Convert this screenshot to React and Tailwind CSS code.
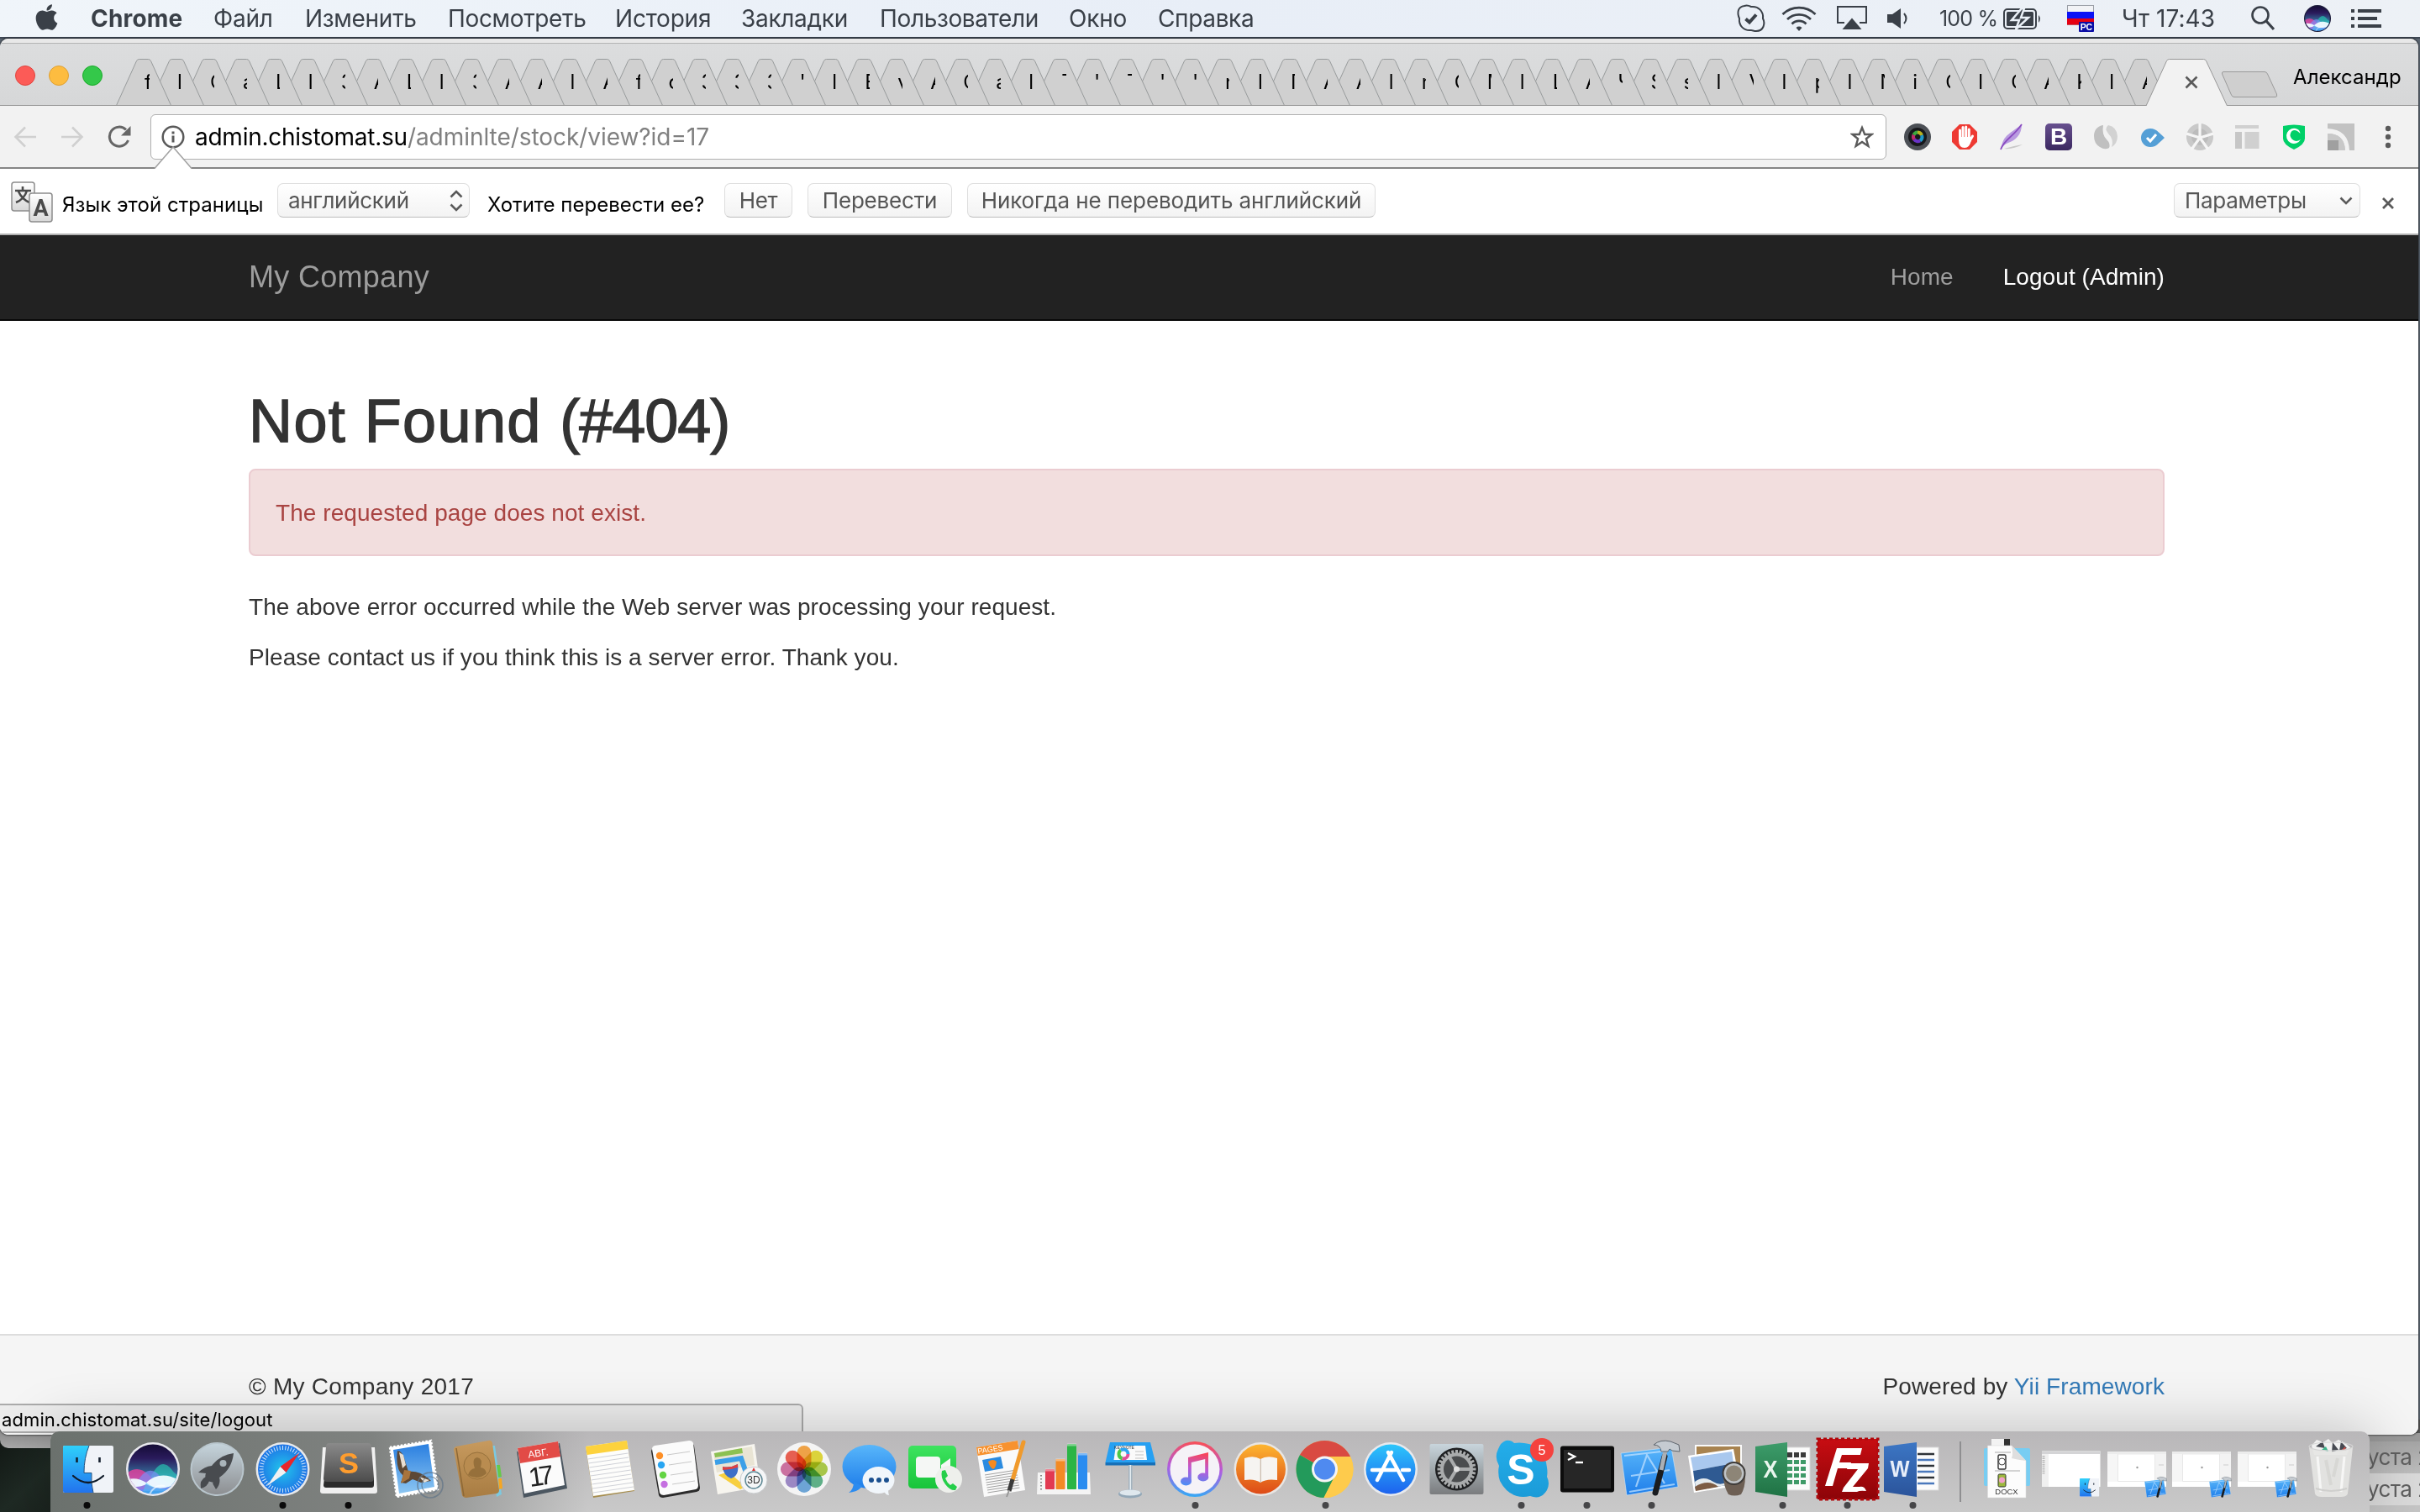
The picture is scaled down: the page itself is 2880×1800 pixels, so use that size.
import React from "react";
import { FaApple } from "react-icons/fa";

const INK = "#3a4048";

/* ---------- menu bar ---------- */

const menus = [
  { t: "Chrome", c: "w-[146px] font-bold tracking-[0.2px]" },
  { t: "Файл", c: "w-[109px] tracking-[-0.2px]" },
  { t: "Изменить", c: "w-[170px] tracking-[-0.3px]" },
  { t: "Посмотреть", c: "w-[199px] tracking-[-0.35px]" },
  { t: "История", c: "w-[150px] tracking-[-0.2px]" },
  { t: "Закладки", c: "w-[165px] tracking-[-0.3px]" },
  { t: "Пользователи", c: "w-[225px] tracking-[-0.35px]" },
  { t: "Окно", c: "w-[106px] tracking-[-0.2px]" },
  { t: "Справка", c: "w-[140px] tracking-[-0.35px]" },
];

function SiriOrb({ id, className, ring = "#e9e9ee" }) {
  return (
    <svg viewBox="0 0 64 64" className={className}>
      <defs>
        <linearGradient id={id + "a"} x1="0" y1="0" x2="0" y2="1">
          <stop offset="0" stopColor="#120a30" />
          <stop offset=".3" stopColor="#2a1b5c" />
          <stop offset=".55" stopColor="#33608f" />
          <stop offset=".75" stopColor="#5b8ff0" />
          <stop offset="1" stopColor="#3b6be0" />
        </linearGradient>
        <clipPath id={id + "c"}><circle cx="32" cy="32" r="29.5" /></clipPath>
      </defs>
      <circle cx="32" cy="32" r="32" fill={ring} />
      <g clipPath={`url(#${id}c)`}>
        <rect width="64" height="64" fill={`url(#${id}a)`} />
        <path d="M30 40c8-16 16-18 24-8 4 6 8 8 12 8v14H28z" fill="#27c9b4" opacity=".65" />
        <path d="M0 38c8-8 18-8 26 0s10 10 16 12l-10 6H0z" fill="#e8409c" opacity=".8" />
        <path d="M14 46c8-14 18-16 26-6 6 8 12 10 24 6v12H10z" fill="#7d8cf5" opacity=".7" />
        <path d="M0 45c8-3 16-2 24 3 12-11 26-11 40-2-12 9-26 12-40 4-8 4-16 4-24 0z" fill="#effcff" opacity=".95" />
        <path d="M24 48c10 8 22 10 40 4v12H18z" fill="#43c6f5" opacity=".55" />
        <path d="M28 62c4-8 10-12 18-10" fill="none" stroke="#fff" strokeWidth="2" opacity=".6" />
      </g>
    </svg>
  );
}

function MenuBar() {
  return (
    <div className="flex h-[46px] w-full items-center border-b-2 border-[#3e4754] bg-gradient-to-r from-[#f0f5fa] via-[#e8eef7] to-[#edf1f6] text-[28px] leading-[44px] text-[#3a4048]">
      <div className="flex w-[108px] justify-start pl-[38px]">
        <FaApple size={35} color={INK} className="-mt-1" />
      </div>
      {menus.map((m) => (
        <div key={m.t} className={"shrink-0 whitespace-nowrap " + m.c}>{m.t}</div>
      ))}
      <div className="flex-1" />
      <div className="flex w-[816px] shrink-0 items-center">
        <svg viewBox="0 0 36 36" className="ml-[2px] h-9 w-9" fill="none" stroke={INK} strokeWidth="2">
          <path d="M10 3c3-1 6 0 8 1 9-1 15 6 14 14 3 6 1 15-8 15-3 0-4-1-6-1C9 33 3 26 4 18 1 11 2 4 10 3z" />
          <path d="M11.500 18.500l4.500 4 8-9" strokeWidth="4" />
        </svg>
        <svg viewBox="0 0 42 30" className="ml-[18px] h-[30px] w-[42px]" fill="none" stroke={INK} strokeWidth="2.800">
          <path d="M1.500 10a28 28 0 0 1 39 0M7 16a20 20 0 0 1 28 0M12.500 21.500a12 12 0 0 1 17 0" />
          <path d="M17.500 26a5 5 0 0 1 7 0L21 30z" fill={INK} stroke="none" />
        </svg>
        <svg viewBox="0 0 36 30" className="ml-6 h-[30px] w-9" fill="none" stroke={INK} strokeWidth="2">
          <path d="M9 20H1V1h34v19h-8" />
          <path d="M18 14.500L29.500 28h-23z" fill={INK} stroke="none" />
        </svg>
        <svg viewBox="0 0 28 26" className="ml-6 h-[26px] w-7">
          <path d="M0 8h6l10-7v24L6 18H0z" fill={INK} />
          <path d="M20 7q5 6 0 12" fill="none" stroke={INK} strokeWidth="2" />
        </svg>
        <div className="ml-[34px] w-[76px] shrink-0 whitespace-nowrap text-[25px] tracking-[-0.8px]">100 %</div>
        <svg viewBox="0 0 46 25" className="h-[25px] w-[46px] shrink-0">
          <rect x="1" y="1" width="38" height="23" rx="4" fill="none" stroke={INK} strokeWidth="2" />
          <rect x="4" y="4" width="32" height="17" rx="1.500" fill={INK} />
          <path d="M42 8q4 4 0 9z" fill={INK} />
          <path d="M22 0L10 14h9l-4 11 15-14h-9l4-11z" fill={INK} stroke="#eaf0f7" strokeWidth="2.500" />
        </svg>
        <svg viewBox="0 0 32 32" className="ml-[30px] h-8 w-8">
          <rect x=".5" y=".5" width="31" height="23" fill="#f2f3f6" stroke="#9a9ea6" />
          <rect y="8" width="32" height="8" fill="#0b12f5" />
          <rect y="16" width="32" height="7.500" fill="#e60012" />
          <rect x="14" y="20" width="18" height="12" rx="1" fill="#0b0ea6" />
          <text x="23" y="30" textAnchor="middle" fontSize="10.500" fontWeight="700" fill="#fff" fontFamily="Liberation Sans, sans-serif">РС</text>
        </svg>
        <div className="ml-[33px] w-[154px] whitespace-nowrap tracking-[0.05px]">Чт 17:43</div>
        <svg viewBox="0 0 28 30" className="h-[30px] w-7" fill="none" stroke={INK} strokeWidth="2.600">
          <circle cx="11" cy="11" r="9.500" /><path d="M18 18l9 10" strokeWidth="3.200" />
        </svg>
        <SiriOrb id="ms" className="ml-[35px] h-8 w-8" ring="#1b1c3a" />
        <svg viewBox="0 0 36 22" className="ml-6 h-[22px] w-9" fill={INK}>
          <rect width="4" height="4" /><rect y="9" width="4" height="4" /><rect y="18" width="4" height="4" />
          <rect x="8" width="28" height="4" /><rect x="8" y="9" width="23" height="4" /><rect x="8" y="18" width="28" height="4" />
        </svg>
      </div>
    </div>
  );
}

/* ---------- tab strip ---------- */

const tabLetters = "f l C a L l 3 A L l 3 A A l A f c 3 3 3 ' l B v A C a l T ' T ' ' r l Г A A l r C M l L A Ч S s l V l p l N i C l C A K l A".split(" ");

function TabStrip() {
  return (
    <div className="relative flex h-[74px] w-full items-end bg-gradient-to-b from-[#dcddde] to-[#d6d7d8] pl-[138px]">
      {tabLetters.map((ch, i) => (
        <div key={i} className="relative h-[57px] w-[38.97px] shrink-0" style={{ zIndex: 62 - i }}>
          <svg viewBox="0 0 68 57" className="absolute left-0 top-0 h-[57px] w-[68px]">
            <path d="M0.500 56.500L24.500 3.500Q25.500 1.500 27.500 1.500H38.500Q40.500 1.500 41.500 3.500L65.500 56.500" fill="#d0d0d0" stroke="#979a9b" />
          </svg>
          <div className="relative ml-[34px] h-[57px] w-[5.5px] overflow-hidden whitespace-nowrap pt-[15px] text-[24px] leading-[28px] text-black">{ch}</div>
        </div>
      ))}
      <div className="absolute bottom-0 left-0 z-[63] h-px w-full bg-[#979797]" />
      <div className="relative z-[64] flex h-[57px] w-[97px] shrink-0 items-center justify-center pl-[11px]">
        <svg viewBox="0 0 97 57" className="absolute left-0 top-0 h-[57px] w-[97px]">
          <path d="M0 57L24.500 3.500Q25.500 1.500 27.500 1.500H68.500Q70.500 1.500 71.500 3.500L96.500 57" fill="#f2f2f2" stroke="#979797" />
        </svg>
        <svg viewBox="0 0 16 16" className="relative h-4 w-4"><path d="M1.500 1.500l13 13M14.500 1.500l-13 13" stroke="#5a5a5a" strokeWidth="2.600" /></svg>
      </div>
      <svg viewBox="0 0 68 34" className="mb-[8px] ml-[-8px] h-[34px] w-[68px] shrink-0">
        <path d="M3 1.500H52Q54.500 1.500 55.500 4L66.500 28Q67.500 31.500 65 31.500H16Q13.500 31.500 12.500 29L1.500 4Q1 1.500 3 1.500z" fill="#cfcfcf" stroke="#9a9a9a" />
      </svg>
      <div className="mb-[16px] ml-[18px] whitespace-nowrap text-[24px] leading-[36px] tracking-[0.05px] text-black">Александр</div>
    </div>
  );
}

/* ---------- toolbar ---------- */

function ExtIcons() {
  const cell = "flex w-14 shrink-0 items-center justify-center";
  const s = "h-8 w-8";
  return (
    <>
      <div className={cell}>
        <svg viewBox="0 0 32 32" className={s}>
          <circle cx="16" cy="16" r="16" fill="#4b4f55" /><circle cx="16" cy="16" r="11" fill="#17181b" />
          <g fill="none" strokeWidth="4">
            <path d="M16 10.500a5.500 5.500 0 0 1 5 3.500" stroke="#b8b020" /><path d="M21 14a5.500 5.500 0 0 1-2 6.500" stroke="#2098c8" />
            <path d="M19 20.500a5.500 5.500 0 0 1-7-1.500" stroke="#6a33c8" /><path d="M12 19a5.500 5.500 0 0 1-.5-5.500" stroke="#c0286c" /><path d="M11.500 13.500a5.500 5.500 0 0 1 4.500-3" stroke="#3ca83e" />
          </g>
        </svg>
      </div>
      <div className={cell}>
        <svg viewBox="0 0 32 32" className={s}>
          <path d="M10 1h12l9 9v12l-9 9H10l-9-9V10z" fill="#ee3a33" />
          <g fill="none" stroke="#fff" strokeLinecap="round" strokeWidth="3"><path d="M10.500 19V8M14 17V4.500M17.700 17V4M21.300 18V7M22 21l3.500-6" /></g>
          <path d="M9 16h14l1 4q-2 9-8 9-7 0-7-9z" fill="#fff" />
        </svg>
      </div>
      <div className={cell}>
        <svg viewBox="0 0 32 32" className={s}>
          <path d="M7 30Q18 31 29 25 17 27 7 30z" fill="#c8c8c8" />
          <path d="M4 29C5 14 16 11 28 1 28 14 20 20 12 23 8 25 6 26 4 29z" fill="#b99be0" />
          <path d="M3 31C7 19 18 16 28 1" fill="none" stroke="#8a4cc0" strokeWidth="1.800" />
        </svg>
      </div>
      <div className={cell}>
        <div className="flex h-8 w-8 items-center justify-center rounded-[5px] bg-gradient-to-b from-[#68508f] to-[#3b2860] font-['Liberation_Sans',sans-serif] text-[28px] font-bold leading-8 text-white">B</div>
      </div>
      <div className={cell}>
        <svg viewBox="0 0 32 32" className={s}>
          <path d="M13 2C6 3 2 8 2 15q0 9 7 13 6 4 11 1 2-5-3-10-6-6-4-17z" fill="#c0c0c0" />
          <path d="M19 2q-5 4 0 10 7 7 4 16 7-4 7-13Q29 4 19 2z" fill="#d2d2d2" />
        </svg>
      </div>
      <div className={cell}>
        <svg viewBox="0 0 32 32" className={s}>
          <path d="M13 6q6 0 10 4.500Q27 14 30 17q-3 3-7 6.500-4 4.500-10 4.500A11 11 0 0 1 13 6z" fill="#559fd6" />
          <path d="M9 17l4 4 7-8" fill="none" stroke="#fff" strokeWidth="3" />
        </svg>
      </div>
      <div className={cell}>
        <svg viewBox="0 0 32 32" className={s}>
          <circle cx="16" cy="16" r="16" fill="#c9c9c9" /><circle cx="16" cy="16" r="10" fill="#bcbcbc" />
          <path d="M16 17V0M16 17L0 12M16 17l16-5M16 17L6 31M16 17l10 14" stroke="#f6f6f6" strokeWidth="3.200" />
        </svg>
      </div>
      <div className={cell}>
        <svg viewBox="0 0 32 32" className={s} fill="#d0d0d0"><rect x="2" y="2" width="28" height="4" /><rect x="2" y="10" width="8" height="20" fill="#c6c6c6" /><rect x="13.500" y="10" width="17" height="20" /></svg>
      </div>
      <div className={cell}>
        <svg viewBox="0 0 32 32" className={s}>
          <path d="M3 3Q16 0 29 3v15q0 7-13 13Q3 25 3 18z" fill="#00d068" />
          <path d="M20 6.800A9 9 0 1 0 24 19q-6 4-10.500-.5-4-5 0-9.500Q18 6 23.500 12 23 8 20 6.800z" fill="#fff" />
        </svg>
      </div>
      <div className={cell}>
        <svg viewBox="0 0 32 32" className={s}>
          <path d="M0 0h32v32H0z" fill="#c2c2c2" /><path d="M0 6Q25 7 26 32h-5Q20 12 0 12z" fill="#f2f2f2" /><path d="M0 12Q20 12 21 32h-8V20H0z" fill="#c8c8c8" /><rect y="20" width="13" height="12" fill="#a0a0a0" />
        </svg>
      </div>
      <div className={cell}>
        <svg viewBox="0 0 8 28" className="h-7 w-2" fill="#5a5a5a"><circle cx="4" cy="4" r="3.200" /><circle cx="4" cy="14" r="3.200" /><circle cx="4" cy="24" r="3.200" /></svg>
      </div>
    </>
  );
}

function Toolbar() {
  return (
    <div className="relative flex h-[75px] w-full items-center border-b-2 border-[#858585] bg-[#f2f2f2]">
      <svg viewBox="0 0 28 26" className="ml-4 h-[26px] w-7" fill="none" stroke="#d0d0d0" strokeWidth="2.600"><path d="M27 13H3M14 1.500L2.500 13 14 24.500" /></svg>
      <svg viewBox="0 0 28 26" className="ml-[28px] h-[26px] w-7" fill="none" stroke="#d0d0d0" strokeWidth="2.600"><path d="M1 13h24M14 1.500L25.500 13 14 24.500" /></svg>
      <svg viewBox="0 0 28 28" className="ml-[28px] h-7 w-7">
        <path d="M24.500 18A11.500 11.500 0 1 1 22 5.500" fill="none" stroke="#666" strokeWidth="3" /><path d="M27.500 1v11.500H16z" fill="#666" />
      </svg>
      <div className="ml-[23px] flex h-[54px] w-[2066px] shrink-0 items-center rounded-[6px] border border-[#b0b0b0] bg-white pl-[12px]">
        <svg viewBox="0 0 28 28" className="h-7 w-7"><circle cx="14" cy="14" r="12.300" fill="none" stroke="#5a5a5a" strokeWidth="2.500" /><rect x="12.500" y="7.500" width="3" height="3" fill="#5a5a5a" /><rect x="12.500" y="12.500" width="3" height="8" fill="#5a5a5a" /></svg>
        <div className="ml-[12px] flex-1 whitespace-nowrap text-[28px] leading-[40px] tracking-[-0.05px] text-[#808080]"><span className="tracking-[-0.25px] text-black">admin.chistomat.su</span>/adminlte/stock/view?id=17</div>
        <svg viewBox="0 0 28 28" className="mr-[14px] h-7 w-7"><path d="M14 3l3.200 8h8.300l-6.600 5.300 2.500 8.700L14 20l-7.400 5 2.500-8.700L2.500 11h8.300z" fill="none" stroke="#5a5a5a" strokeWidth="2.400" /></svg>
      </div>
      <div className="ml-[9px] flex items-center"><ExtIcons /></div>
      <svg viewBox="0 0 46 28" className="absolute left-[183px] top-[48px] h-7 w-[46px]"><path d="M1 27L23 1l22 26v1H1z" fill="#fff" /><path d="M1 26.500L23 1l22 25.500" fill="none" stroke="#a4a4a4" strokeWidth="1.600" /></svg>
    </div>
  );
}

/* ---------- translate bar ---------- */

const btn = "flex h-[41px] shrink-0 items-center rounded-[7px] border border-[#dedede] border-b-[#bdbdbd] bg-gradient-to-b from-white to-[#f3f3f3] text-[26px] text-[#555] whitespace-nowrap";

function InfoBar() {
  return (
    <div className="flex h-[79px] w-full items-start border-b-2 border-[#b2b2b2] bg-white pt-[17px]">
      <svg viewBox="0 0 50 50" className="ml-[13px] mt-[-2px] h-[50px] w-[50px]">
        <defs><linearGradient id="tr" x1="0" y1="0" x2="0" y2="1"><stop offset="0" stopColor="#fff" /><stop offset="1" stopColor="#d8d8d8" /></linearGradient></defs>
        <rect x="1" y="1" width="27" height="34" rx="3" fill="url(#tr)" stroke="#8c8c8c" strokeWidth="1.500" />
        <path d="M5 11h19M14 6v5M19 11q-3 10-13 14M9 12q4 9 13 13" fill="none" stroke="#4a4a4a" strokeWidth="2.600" />
        <rect x="22" y="14" width="27" height="34" rx="3" fill="url(#tr)" stroke="#8c8c8c" strokeWidth="1.500" />
        <text x="35.500" y="41" textAnchor="middle" fontSize="27" fontWeight="700" fill="#4a4a4a" fontFamily="Roboto, sans-serif">A</text>
      </svg>
      <div className="ml-[11px] mt-[9px] w-[256px] shrink-0 whitespace-nowrap text-[24px] leading-[34px] tracking-[0.05px] text-black">Язык этой страницы</div>
      <div className={btn + " w-[229px] justify-between pl-[12px] pr-[7px] tracking-[-0.3px]"}>
        английский
        <svg viewBox="0 0 16 26" className="h-[26px] w-4" fill="none" stroke="#5a5a5a" strokeWidth="2.600"><path d="M1.500 8.500L8 2l6.500 6.500M1.500 17.500L8 24l6.500-6.500" /></svg>
      </div>
      <div className="ml-[21px] mt-[9px] w-[282px] shrink-0 whitespace-nowrap text-[24px] leading-[34px] tracking-[0px] text-black">Хотите перевести ее?</div>
      <div className={btn + " w-[81px] justify-center tracking-[-0.3px]"}>Нет</div>
      <div className={btn + " ml-[18px] w-[172px] justify-center tracking-[-0.2px]"}>Перевести</div>
      <div className={btn + " ml-[18px] w-[486px] justify-center tracking-[-0.1px]"}>Никогда не переводить английский</div>
      <div className="flex-1" />
      <div className={btn + " w-[222px] justify-between pl-[12px] pr-[8px] tracking-[-0.3px]"}>
        Параметры
        <svg viewBox="0 0 16 10" className="h-[10px] w-4" fill="none" stroke="#5a5a5a" strokeWidth="2.600"><path d="M1.500 1.500L8 8l6.500-6.500" /></svg>
      </div>
      <svg viewBox="0 0 16 16" className="ml-[25px] mr-[28px] mt-[16px] h-4 w-4"><path d="M2 2l12 12M14 2L2 14" stroke="#5a5a5a" strokeWidth="2.800" /></svg>
    </div>
  );
}

/* ---------- web page ---------- */

function WebPage() {
  return (
    <div className="flex flex-1 flex-col bg-white font-['Liberation_Sans',Arial,sans-serif] text-[28px] leading-[40px] tracking-[0.06px] text-[#333]">
      <nav className="flex h-[102px] items-center border-b-2 border-[#080808] bg-[#222] pl-[296px] pr-[302px] text-[#9d9d9d]">
        <div className="text-[36px] tracking-[0.3px]">My Company</div>
        <div className="flex-1" />
        <div>Home</div>
        <div className="ml-[59px] text-white">Logout (Admin)</div>
      </nav>
      <main className="flex-1 px-[296px] pr-[302px] pt-[79px]">
        <h1 className="whitespace-nowrap text-[72px] leading-[80px] tracking-[1.4px] [-webkit-text-stroke:1.4px_#333]">Not Found <span className="tracking-[-1px]">(#404)</span></h1>
        <div className="mt-[17px] h-[104px] rounded-[8px] border-2 border-[#ebccd1] bg-[#f2dede] p-[30px] pt-[31px] text-[#a94442]">The requested page does not exist.</div>
        <p className="mt-[41px]">The above error occurred while the Web server was processing your request.</p>
        <p className="mt-[20px]">Please contact us if you think this is a server error. Thank you.</p>
      </main>
      <footer className="flex h-[120px] items-start justify-between border-t-2 border-[#ddd] bg-[#f5f5f5] pl-[296px] pr-[302px] pt-[41px]">
        <div className="tracking-[0.27px]">© My Company 2017</div>
        <div className="tracking-[0.1px]">Powered by <span className="text-[#337ab7]">Yii Framework</span></div>
      </footer>
    </div>
  );
}

/* ---------- dock icons, each drawn in a 78 x 96 cell ---------- */

const Cell = ({ children, dot }) => (
  <svg viewBox="0 0 77.6 96" className="h-24 w-[77.6px] shrink-0">
    {children}
    {dot && <circle cx="38.500" cy="88" r="4" fill={dot} />}
  </svg>
);
const T = ({ children, ...p }) => <text fontFamily="Liberation Sans, sans-serif" textAnchor="middle" {...p}>{children}</text>;

const FinderFace = () => (
  <g>
    <rect x="10" y="17" width="60" height="56" rx="2" fill="#f0f3f8" />
    <path d="M12 17H41C37 27 35 37 35 49.500h9Q43 62 46 73H12q-2 0-2-2V19q0-2 2-2z" fill="url(#gFinder)" />
    <path d="M26.500 31v6M53.500 31v6" stroke="#15202e" strokeWidth="2.600" />
    <path d="M41 17C37 27 35 37 35 49.500h9Q43 62 46 73" fill="none" stroke="#23517e" strokeWidth="1" />
    <path d="M22 53q18 16 36 0" fill="none" stroke="#0f1a28" strokeWidth="2.200" strokeLinecap="round" />
  </g>
);

const XcodeArt = () => (
  <g>
    <path d="M2 26L62 19 70 66 9 76z" fill="url(#gBlue)" stroke="#cfe6fa" strokeWidth=".6" />
    <path d="M6 29l53-6M12 72l54-9M20 66L33 28l21 34M14 53l46-7" fill="none" stroke="#bfe0ff" strokeWidth="2.200" opacity=".75" />
    <path d="M54 30L43 73" stroke="#1a1c20" strokeWidth="7" strokeLinecap="round" />
    <path d="M56 18L50 46" stroke="#aab0b6" strokeWidth="5" />
    <path d="M41 16q8-7 20-4l10 4 1 8-9-1-3-2-2 3h-8q-1-8-9-8z" fill="#c5cbd1" stroke="#5d646c" strokeWidth="1" />
  </g>
);

const petals = [["#f9a23a", 0], ["#e3da2c", 45], ["#a9cb3c", 90], ["#55b183", 135], ["#66a5dd", 180], ["#9a84c8", 225], ["#cf6a9f", 270], ["#f05545", 315]];
const ticks = Array.from({ length: 48 }, (_, i) => i * 7.5);
const teeth = Array.from({ length: 28 }, (_, i) => i * (360 / 28));

function Defs() {
  const g = (id, a, b) => (
    <linearGradient id={id} x1="0" y1="0" x2="0" y2="1"><stop offset="0" stopColor={a} /><stop offset="1" stopColor={b} /></linearGradient>
  );
  return (
    <svg className="absolute h-0 w-0">
      <defs>
        {g("gFinder", "#2fd0fb", "#2273ee")}
        {g("gBlue", "#58b6fa", "#1f7eea")}
        {g("gLaunch", "#c5d4dc", "#8d8f92")}
        {g("gGray", "#8a8a8a", "#4c4c4c")}
        {g("gGreen", "#3ee35f", "#18c43a")}
        {g("gOrange", "#fdb52f", "#dd4a17")}
        {g("gStore", "#2cc6fb", "#1d62ee")}
        {g("gPrefs", "#c8d5dc", "#7a7c7e")}
        {g("gSky", "#2a7fe0", "#8cc6f2")}
        {g("gSkype", "#24aeea", "#1b9bd8")}
        {g("gFz", "#c80d12", "#8c0408")}
        {g("gXl", "#3d9c6a", "#1f7244")}
        {g("gWd", "#3c76c4", "#2b549b")}
        {g("gBook", "#c79a5e", "#a87c42")}
        <linearGradient id="gTunes" x1=".6" y1="0" x2=".5" y2="1"><stop offset="0" stopColor="#fb4e53" /><stop offset=".5" stopColor="#b05ce0" /><stop offset="1" stopColor="#35a8f5" /></linearGradient>
        <linearGradient id="gNote" gradientUnits="userSpaceOnUse" x1="42" y1="25" x2="36" y2="65"><stop offset="0" stopColor="#fa4457" /><stop offset=".5" stopColor="#b95ad8" /><stop offset="1" stopColor="#4d8cf5" /></linearGradient>
        <radialGradient id="gSaf"><stop offset="0" stopColor="#22c7ec" /><stop offset="1" stopColor="#1e73e6" /></radialGradient>
      </defs>
    </svg>
  );
}

function DockIcons() {
  const B = "#0a0a0a", G = "#464648";
  return (
    <>
      <Cell dot={B}><FinderFace /></Cell>
      <div className="flex h-24 w-[77.6px] shrink-0 items-start justify-center pt-[13px]"><SiriOrb id="ds" className="h-16 w-16" /></div>
      <Cell>
        <circle cx="38.500" cy="45" r="32" fill="#b9c6cd" /><circle cx="38.500" cy="45" r="30" fill="url(#gLaunch)" />
        <path d="M58 26Q42 28 32 41q-9 1-16 8l9 1q-2 5 2 9l7 2-1 1 4 7q6-6 4-14 15-10 17-29z" fill="#484b4f" /><path d="M25 54q-8 4-6 14 8-2 10-9z" fill="#484b4f" /><circle cx="45.500" cy="38" r="4" fill="#a9b4ba" />
      </Cell>
      <Cell dot={B}>
        <circle cx="38.500" cy="45" r="32" fill="#e8e9eb" /><circle cx="38.500" cy="45" r="29.500" fill="url(#gSaf)" />
        {ticks.map((a) => <path key={a} d="M38.500 17v5" transform={`rotate(${a} 38.500 45)`} stroke="#fff" strokeWidth="1" opacity=".8" />)}
        <path d="M58 26L42.500 49l-7-7z" fill="#e8262a" /><path d="M20 65l15.500-23 7 7z" fill="#f1f1f1" />
      </Cell>
      <Cell dot={B}>
        <path d="M8 19h62l3 52q0 3-3 3H8q-3 0-3-3z" fill="#f0f0f0" />
        <path d="M10 56h59v8q0 3-3 3H12q-3 0-3-3z" fill="#2b2b2b" />
        <path d="M16 14h46q4 0 4 4l3 38q0 4-4 4H13q-4 0-4-4l3-38q0-4 4-4z" fill="url(#gGray)" />
        <T x="39" y="50" fontSize="36" fontWeight="700" fill="#ff9d2e">S</T>
      </Cell>
      <Cell>
        <path d="M11 19L60 11 68 69 19 78z" fill="#fff" stroke="#fff" strokeWidth="2.500" strokeDasharray="2.500 1.800" />
        <path d="M15 22L57 15 64 66 22 74z" fill="url(#gSky)" />
        <path d="M20 23q6 0 9 12l4 13q14-2 27 11l-12 2-10-4-8 5-6-1 3-8q-10-8-7-30z" fill="#5d4835" /><path d="M22 25l5 3 3 12-4 4zM46 54l12 4-6 3z" fill="#e9dfd2" /><path d="M28 46l8 1-2 9-10 6z" fill="#a8743d" />
        <circle cx="59" cy="64" r="15" fill="none" stroke="#5f7488" strokeWidth="1.600" opacity=".7" /><circle cx="59" cy="64" r="10" fill="none" stroke="#5f7488" strokeWidth="1.200" opacity=".7" />
      </Cell>
      <Cell>
        <path d="M52 17l6 0 8 58-6 3z" fill="#7cc9e0" /><path d="M60 40l4 0 2 14-4 1z" fill="#66c94a" /><path d="M62 56l4 0 1 12-4 1z" fill="#f5a623" />
        <path d="M12 18L50 11q4-1 5 3l8 56q0 3-3 4L24 79q-4 0-5-3L9 22q0-3 3-4z" fill="url(#gBook)" /><path d="M12 20l9 57" stroke="#8d6836" strokeWidth="1.500" />
        <circle cx="37" cy="41" r="16" fill="#b98c50" stroke="#96703b" /><path d="M26 52q2-7 8-8-4-12 3-13 7 1 4 12 6 1 7 7-10 9-22 2z" fill="#96703b" />
      </Cell>
      <Cell>
        <path d="M7 24L58 14l9 54-52 11z" fill="#4b5660" />
        <path d="M8 20L56 12 64 64 16 74z" fill="#fbfbfb" /><path d="M8 20L56 12l3 18L11 38z" fill="#e24b46" />
        <T x="33" y="30" fontSize="12" fill="#fff" transform="rotate(-8 33 30)">АВГ.</T>
        <T x="37" y="64" fontSize="32" fill="#222" transform="rotate(-8 37 60)" textLength="30">17</T>
      </Cell>
      <Cell>
        <path d="M11 19L60 11 69 71 20 79z" fill="#a68d4e" /><path d="M11 18L60 11 69 70 20 77z" fill="#fdfdfb" /><path d="M11 18L60 11l1.500 10L12.500 28z" fill="#fdd23d" />
        {[0, 1, 2, 3, 4, 5, 6, 7, 8].map((i) => <path key={i} d={`M${13.500 + i * 0.8} ${33 + i * 5}l48-7`} stroke="#c9ccd2" strokeWidth=".9" />)}
      </Cell>
      <Cell>
        <path d="M14 20L57 14q4 0 5 3l7 50q0 4-4 5L25 79q-4 0-5-3L11 24q0-3 3-4z" fill="#2b2b2b" />
        <path d="M15 17L56 11q4 0 5 3l6 50q0 4-3 5L26 76q-4 0-5-3L12 21q0-3 3-4z" fill="#fbfbfb" />
        <path d="M30 28l27-4M32 40l27-4M34 52l27-4M36 63l27-4" stroke="#c8c8c8" />
        <circle cx="21" cy="29" r="4.200" fill="#fd8f26" /><circle cx="23" cy="40" r="4.200" fill="#27a5f2" /><circle cx="25" cy="52" r="4.200" fill="#63d443" /><circle cx="26.500" cy="63" r="4.200" fill="#c56fe0" />
      </Cell>
      <Cell>
        <path d="M5 24L57 15 64 66 13 75z" fill="#f7f5ef" /><path d="M8 26l46-8 3 22-45 9z" fill="#e9e4d4" /><path d="M9 26l33-6 1 6-33 5z" fill="#8cc152" />
        <path d="M10 37l31-5 9 26M16 35" fill="none" stroke="#3b9fe8" strokeWidth="6" /><path d="M14 52l12-4 20 18-6 3z" fill="#f7cf3f" />
        <path d="M19 42q9 2 18-3 2 14-8 17-9-3-10-14z" fill="#3d6fc8" /><path d="M19 42q9 2 18-3l0 4q-9 3-18 3z" fill="#e04040" />
        <circle cx="56" cy="58" r="16" fill="#f5f6f7" stroke="#c9ccce" /><circle cx="56" cy="58" r="10" fill="none" stroke="#5d8794" strokeWidth="1.500" />
        <T x="56" y="62.500" fontSize="12" fill="#333">3D</T><path d="M56 43l2 4h-4z" fill="#e03030" />
      </Cell>
      <Cell>
        <circle cx="38" cy="45" r="32" fill="#f4f4f4" />
        {petals.map(([c, a]) => <rect key={a} x="29.500" y="17" width="17" height="28" rx="8.500" fill={c} opacity=".92" className="mix-blend-multiply" transform={`rotate(${a} 38 45)`} />)}
      </Cell>
      <Cell>
        <ellipse cx="38.500" cy="42" rx="32" ry="26" fill="url(#gBlue)" /><path d="M20 60q0 9-6 13 12-1 16-8z" fill="#2a8bf0" />
        <ellipse cx="49.500" cy="58" rx="19" ry="16" fill="#f1f6fb" /><path d="M56 71q2 5 6 5-1-3-1-8z" fill="#f1f6fb" />
        <circle cx="41" cy="58" r="3" fill="#1a4f8f" /><circle cx="50" cy="58" r="3" fill="#1a4f8f" /><circle cx="59" cy="58" r="3" fill="#1a4f8f" />
      </Cell>
      <Cell>
        <rect x="7" y="17" width="57" height="51" rx="5" fill="url(#gGreen)" /><rect x="16" y="30" width="29" height="25" rx="4" fill="#f5f7f5" /><path d="M46 40l11-8v18l-11-5z" fill="#f5f7f5" />
        <circle cx="55" cy="57" r="16" fill="#eef0ec" /><path d="M47 47l4-1 3 7-3 3q2 5 6 8l3-2 5 4-2 4q-6 1-12-7t-4-16z" fill="#25cf4a" />
      </Cell>
      <Cell>
        <path d="M10 19L59 11 68 70 19 78z" fill="#fafafa" /><path d="M10 19L59 11l1.500 10L11.500 29z" fill="#f7922f" />
        <T x="27" y="24.500" fontSize="9" fill="#fff" transform="rotate(-9 27 24)">PAGES</T>
        <path d="M17 34l22-4 3 14-22 4z" fill="#2b8be0" /><path d="M24 36q6-4 10 0-1 8-4 9-4-2-6-9z" fill="#f58a1f" />
        {[0, 1, 2, 3, 4, 5, 6, 7].map((i) => <path key={i} d={`M${20 + i * 0.5} ${52 + i * 3}l38-6`} stroke="#a0a0a0" strokeWidth="1" />)}
        <path d="M66 13L53 58" stroke="#f09a2c" strokeWidth="5" strokeLinecap="round" /><path d="M53 57l-4 14" stroke="#3a3a3a" strokeWidth="5" /><path d="M49 70l-3 8" stroke="#999" strokeWidth="2" />
      </Cell>
      <Cell>
        <path d="M6 49h62l1 26H5z" fill="#f4f4f4" /><path d="M10 52v18" stroke="#888" strokeWidth="2" strokeDasharray="1.500 2.500" />
        <rect x="15" y="45" width="11" height="24" rx="1" fill="#e23a52" /><rect x="27.500" y="33" width="11" height="36" rx="1" fill="#f28a24" /><rect x="41" y="15" width="11" height="54" rx="1" fill="#2bb545" /><rect x="54" y="26" width="11" height="43" rx="1" fill="#2a8cf0" />
        <path d="M15 46h11M27.500 34h11M41 16h11M54 27h11" stroke="#fff" strokeWidth="3" opacity=".4" />
      </Cell>
      <Cell>
        <path d="M14 13h48l6 24H8.500z" fill="#26a0f2" /><path d="M8.500 37H68v3.500H8.500z" fill="#1670b8" />
        <path d="M21 17h35l2 17H18.500z" fill="#fafafa" /><T x="31" y="21.500" fontSize="5" fill="#333">KEYNOTE</T>
        <circle cx="30" cy="27" r="5.500" fill="none" stroke="#e0509a" strokeWidth="4" strokeDasharray="10 25" /><circle cx="30" cy="27" r="5.500" fill="none" stroke="#4cc94a" strokeWidth="4" strokeDasharray="12 23" strokeDashoffset="-10" /><circle cx="30" cy="27" r="5.500" fill="none" stroke="#2fa5f0" strokeWidth="4" strokeDasharray="13 22" strokeDashoffset="-22" />
        <path d="M44 24h10M44 28h10M44 32h10" stroke="#c4c4c4" />
        <rect x="36" y="40" width="4.500" height="33" fill="#a3b2be" /><rect x="37.500" y="40" width="1.500" height="33" fill="#e4ecf1" /><ellipse cx="38" cy="74.500" rx="14" ry="5" fill="#93a8b8" /><ellipse cx="38" cy="73" rx="12.500" ry="3.500" fill="#dfe8ee" />
      </Cell>
      <Cell dot={G}>
        <circle cx="38" cy="45" r="33" fill="url(#gTunes)" /><circle cx="38" cy="45" r="29.500" fill="#f5f2f7" />
        <path d="M30 31l24-6v28.500h-3.800V33l-16.400 4v22H30z" fill="url(#gNote)" /><ellipse cx="27.500" cy="59.500" rx="6.500" ry="5" fill="url(#gNote)" /><ellipse cx="47.800" cy="54.500" rx="6.500" ry="5" fill="url(#gNote)" />
      </Cell>
      <Cell>
        <circle cx="38.500" cy="45" r="32" fill="#e9e6e3" /><circle cx="38.500" cy="45" r="29.500" fill="url(#gOrange)" />
        <path d="M38 33q-8-5-19-1v26q12-2 19 3 7-5 20-3V32q-12-4-20 1z" fill="#f6f4f1" /><path d="M38.300 33v28" stroke="#c9b9a9" strokeWidth="1.200" />
      </Cell>
      <Cell dot={G}>
        <circle cx="37.500" cy="45" r="34" fill="#fecb4c" />
        <path d="M37.500 45L8 28a34 34 0 0 1 59 0l1 2H37.500z" fill="#d94a42" />
        <path d="M37.500 45L8 28a34 34 0 0 0 28.500 51l14-27z" fill="#239a5b" />
        <path d="M50 52L36.500 79A34 34 0 0 0 68 30H40z" fill="#fecb4c" />
        <circle cx="37.500" cy="45" r="15.500" fill="#f5f5f5" /><circle cx="37.500" cy="45" r="12.500" fill="#4f8af0" />
      </Cell>
      <Cell>
        <circle cx="38" cy="45" r="32" fill="#e8eaee" /><circle cx="38" cy="45" r="29.500" fill="url(#gStore)" />
        <path d="M39 25L22 58M35 25l18 33M16 46h28M52 46h8" stroke="#fff" strokeWidth="4.500" strokeLinecap="round" />
      </Cell>
      <Cell>
        <rect x="6.500" y="15" width="64" height="60" rx="2" fill="url(#gPrefs)" /><circle cx="38.500" cy="45" r="25.500" fill="#1f2022" />
        {teeth.map((a) => <rect key={a} x="37" y="22" width="3" height="5" fill="#a9abac" transform={`rotate(${a} 38.500 45)`} />)}
        <circle cx="38.500" cy="45" r="17.500" fill="#4a4c4e" stroke="#a9abac" strokeWidth="4" /><path d="M38.500 45h17M38.500 45l-9-15M38.500 45l-9 15" stroke="#a9abac" strokeWidth="4" /><circle cx="38.500" cy="45" r="3.500" fill="#e0e0e0" />
      </Cell>
      <Cell dot={G}>
        <path d="M20 11q6-1 10 3 6-1 12 0 24 2 27 29 1 6 0 11 4 8 0 16-7 12-20 7-24 5-36-18-3-9-1-18-6-10-1-20 3-8 9-10z" fill="url(#gSkype)" />
        <T x="38" y="63" fontSize="50" fontWeight="700" fill="#fff">S</T>
        <circle cx="63" cy="22" r="14" fill="#f5423e" /><T x="63" y="28" fontSize="16" fill="#fff">5</T>
      </Cell>
      <Cell dot={G}>
        <rect x="7" y="16" width="64" height="57" rx="3" fill="#b8b8b8" /><rect x="7" y="17.500" width="64" height="55" rx="3" fill="#0c0c0c" /><rect x="11" y="22" width="56" height="46" fill="#262626" />
        <path d="M16 26l8 4-8 4" fill="none" stroke="#fff" strokeWidth="2.400" /><path d="M25 37h9" stroke="#fff" strokeWidth="2.400" />
      </Cell>
      <Cell dot={G}><XcodeArt /></Cell>
      <Cell>
        <rect x="12" y="16" width="56" height="44" fill="#fafafa" /><rect x="14" y="18" width="52" height="30" fill="#a8834f" />
        <path d="M4 29L58 21 66 64 11 73z" fill="#fff" /><path d="M7 31L56 24l2 14L10 47z" fill="#a9c8ee" /><path d="M10 47l48-9 4 24-49 8z" fill="#2f5a92" /><path d="M12 60q10-8 22 0t26-8l2 10-49 8z" fill="#e6ebee" /><path d="M12 66q16-10 28 0l-27 5z" fill="#7d5c44" />
        <path d="M46 53h26q0 14-5 22-8 3-15 0-6-10-6-22z" fill="#6d5f54" /><circle cx="58.500" cy="50" r="14" fill="#3d3a38" /><circle cx="58.500" cy="50" r="12" fill="#bfc3c6" /><circle cx="58.500" cy="50" r="9.500" fill="#8d8577" />
      </Cell>
      <Cell dot={G}>
        <rect x="34" y="19" width="37" height="51" fill="#fbfbfb" stroke="#d9d9d9" />
        <path d="M44 25h6v6h-6zM52 25h6v6h-6zM60 25h6v6h-6z" fill="#3a3a3a" /><path d="M44 34h6v5h-6zM52 34h6v5h-6zM60 34h6v5h-6zM44 42h6v5h-6zM52 42h6v5h-6zM60 42h6v5h-6zM44 50h6v5h-6zM52 50h6v5h-6zM60 50h6v5h-6zM44 58h6v5h-6zM52 58h6v5h-6zM60 58h6v5h-6z" fill="#3f9a68" />
        <path d="M6 18L44 13v65L6 72z" fill="url(#gXl)" /><T x="24" y="55" fontSize="30" fontWeight="700" fill="#eaf6ee" textLength="17" lengthAdjust="spacingAndGlyphs">X</T>
      </Cell>
      <Cell dot={G}>
        <rect x="3" y="9" width="72" height="72" fill="url(#gFz)" stroke="#b00a0e" strokeWidth="3" strokeDasharray="4 3" />
        <path d="M26 20h30l-2 8H32l-3 9h14l-2 7H27l-6 21h-9zM40 38h24l-1 6-18 22h8q6-1 8 5-8-1-11 1H32l2-5 17-22H38z" fill="#fff" />
      </Cell>
      <Cell dot={G}>
        <rect x="34" y="19" width="35" height="51" fill="#fbfbfb" stroke="#d9d9d9" />
        <path d="M44 27h20M44 41h20M44 55h20" stroke="#2e3338" strokeWidth="2.500" /><path d="M44 34h20M44 48h20M44 62h20" stroke="#4a78bc" strokeWidth="2.500" />
        <path d="M4 18L43 13v65L4 72z" fill="url(#gWd)" /><T x="23" y="54" fontSize="28" fontWeight="700" fill="#e8effa" textLength="23" lengthAdjust="spacingAndGlyphs">W</T>
      </Cell>
      <div className="flex h-24 w-[35px] shrink-0 items-start justify-center pt-3"><div className="h-[72px] w-[2px] bg-[#8f8f91]" /></div>
      <Cell>
        <rect x="11" y="20" width="55" height="45" rx="2" fill="#78cdf2" /><rect x="20" y="9" width="22" height="12" fill="#f3f3f3" /><rect x="35" y="9" width="7" height="9" fill="#333" />
        <path d="M15.500 17H44L61 35v44H15.500z" fill="#fcfcfc" stroke="#dcdcdc" strokeWidth=".6" /><path d="M44 17q2 10 0 15 8 2 17 3z" fill="#dedede" />
        <rect x="28" y="28" width="9" height="17" rx="1.500" fill="none" stroke="#333" strokeWidth="1.400" /><circle cx="32.500" cy="36" r="4" fill="#fff" stroke="#333" /><rect x="28" y="51" width="9" height="15" rx="1.500" fill="#9bb83c" stroke="#333" /><circle cx="32.500" cy="58" r="3.500" fill="#f2a0c8" />
        <path d="M24 25h19M24 47h30" stroke="#aaa" strokeWidth="1.200" /><T x="38" y="75.500" fontSize="9.500" fill="#333">DOCX</T>
      </Cell>
      <Cell>
        <rect x="2" y="23.500" width="69.500" height="42.500" fill="#fff" /><rect x="2" y="23.500" width="69.500" height="3.500" fill="#d4d4d6" /><rect x="2" y="27" width="8" height="39" fill="#f0f0f0" /><path d="M4 29v22" stroke="#bbb" strokeDasharray="1.500 1" strokeWidth="3" />
        <g transform="translate(43.2 49.500) scale(.385)"><FinderFace /></g>
      </Cell>
      {[0, 1, 2].map((i) => (
        <Cell key={i}>
          <rect x="2" y="24" width="70" height="42" fill="#fff" /><rect x="2" y="24" width="70" height="3.500" fill="#ececec" /><rect x="2" y="27" width="13" height="33" fill="#f6f6f6" /><rect x="59" y="27" width="13" height="33" fill="#f3f3f3" /><path d="M14.500 27v32.500h44V27" fill="none" stroke="#e8e8e8" /><circle cx="37.500" cy="43" r="1.200" fill="#999" /><path d="M63 40h6" stroke="#ccc" />
          <g transform="translate(45.500 50) scale(.375)"><XcodeArt /></g>
        </Cell>
      ))}
      <Cell>
        <path d="M13 17l6-7 8 3 6-4 5 5 7-4 8 4 6 5-4 9H16z" fill="#f1f1f1" /><path d="M18 18l8-6 3 8zM38 13l7 9-8 3zM48 12l7 8-9 3z" fill="#474a52" /><path d="M25 22l5-4 3 6z" fill="#3bb38a" /><path d="M49 22l4-4 1 5z" fill="#c9504a" />
        <path d="M10 19q26 10 52 0l-6 55q-1 4-8 4H25q-7 0-8-4z" fill="#e6e6e3" opacity=".9" /><path d="M20 30l4 42M52 30l-4 42" stroke="#fff" strokeWidth="3" opacity=".7" /><path d="M30 34l6 30M44 32l-5 22" stroke="#d3d3d0" strokeWidth="4" opacity=".7" /><path d="M18 68q18 6 37 0" fill="none" stroke="#cfcfcd" strokeWidth="2" />
        <ellipse cx="36" cy="18" rx="26" ry="5" fill="none" stroke="#d5d5d5" strokeWidth="1.200" />
      </Cell>
    </>
  );
}

export default function App() {
  return (
    <div className="relative flex h-[1800px] w-[2880px] flex-col overflow-hidden bg-[#5c6672] font-[Inter,'Noto_Sans',sans-serif]">
      <Defs />
      <MenuBar />
      {/* what shows beneath the browser window */}
      <div className="absolute bottom-0 left-0 flex h-[110px] w-full justify-between bg-[#8a8a8a]">
        <div className="w-[120px] bg-gradient-to-br from-[#101512] via-[#1f2a24] to-[#161c18]">
          <div className="h-[34px] w-full rounded-bl-[10px] bg-gradient-to-b from-[#777] to-[#aaa]" />
        </div>
        <div className="flex w-[63px] flex-col overflow-hidden bg-[#e0e0e0] text-[26px] leading-[38px] text-[#606060]">
          <div className="h-[16px] bg-[#555]" />
          <div className="h-[10px] bg-[#999]" />
          <div className="h-[38px] whitespace-nowrap bg-gradient-to-b from-[#a5a5a5] to-[#bdbdbd] tracking-[-0.6px]">уста 2</div>
          <div className="h-[38px] whitespace-nowrap bg-[#dadada] tracking-[-0.6px]">уста 2</div>
          <div className="flex-1 bg-[#c4c4c4]" />
        </div>
      </div>
      {/* browser window */}
      <div className="relative mr-[2px] flex h-[1662px] flex-col overflow-hidden rounded-[10px] bg-white shadow-[0_0_2px_1px_rgba(0,0,0,0.45)]">
        <div className="h-[6px] shrink-0 border-b border-[#b4b4b4] bg-[#e8e8e8]" />
        <div className="relative shrink-0">
          <TabStrip />
          <div className="absolute left-[18px] top-[26px] flex gap-4">
            <div className="h-6 w-6 rounded-full border border-[#e0443e] bg-[#fc5b57]" />
            <div className="h-6 w-6 rounded-full border border-[#dea034] bg-[#fdbc40]" />
            <div className="h-6 w-6 rounded-full border border-[#1aab29] bg-[#34c84a]" />
          </div>
        </div>
        <Toolbar />
        <InfoBar />
        <WebPage />
        <div className="absolute bottom-[2px] left-[-2px] h-[35px] w-[958px] rounded-tr-[6px] border-2 border-[#ababab] bg-[#ececec] pl-[2px] pt-[1px] text-[22px] leading-[32px] tracking-[0.1px] text-black">admin.chistomat.su/site/logout</div>
      </div>
      {/* dock */}
      <div className="absolute bottom-0 left-[60px] flex h-24 w-[2760px] items-start rounded-t-[10px] bg-gradient-to-b from-[#b9b7b9] to-[#c9c9c9] shadow-[0_0_70px_rgba(0,0,0,0.24)]">
        <div className="absolute left-0 top-0 h-full w-[640px] rounded-tl-[10px] bg-gradient-to-r from-[#6b716d] via-[#7f8280] via-60% to-transparent" />
        <div className="relative flex pl-[5.2px]"><DockIcons /></div>
      </div>
    </div>
  );
}
